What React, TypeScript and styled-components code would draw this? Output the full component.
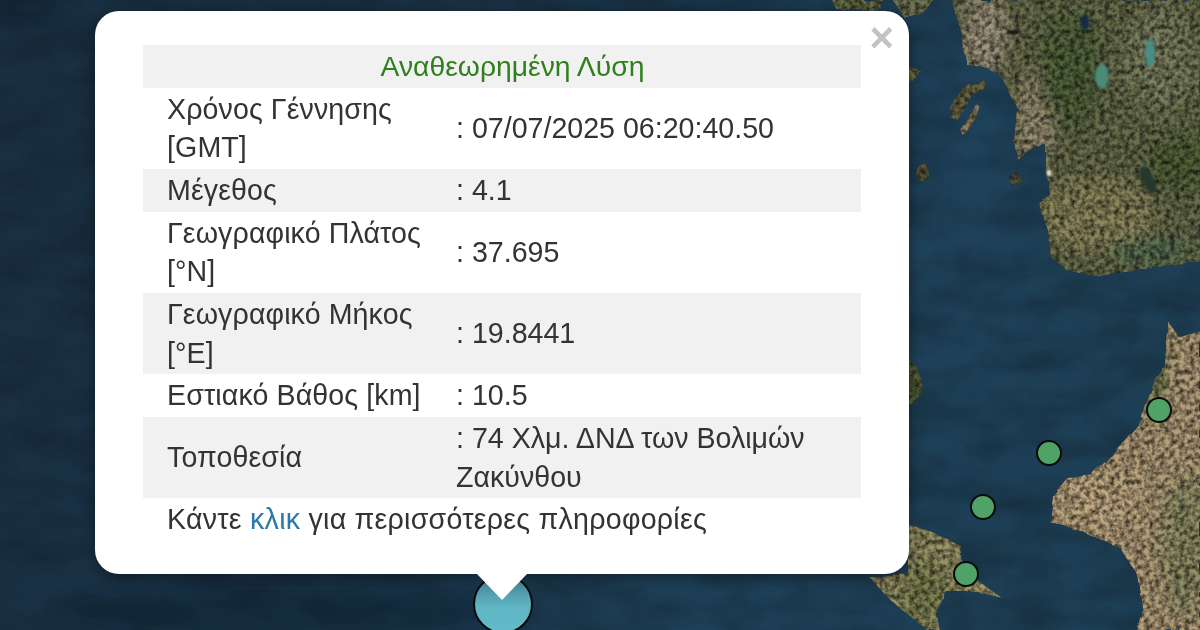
import React from 'react';
import styled, {createGlobalStyle} from 'styled-components';

const GlobalStyle = createGlobalStyle`
    html, body {
        margin: 0;
        padding: 0;
        background: #1b3346;
    }
`

type QuakeRow = {
    label: string
    value: string
}

const rows: QuakeRow[] = [
    {label: 'Χρόνος Γέννησης [GMT]', value: ': 07/07/2025 06:20:40.50'},
    {label: 'Μέγεθος', value: ': 4.1'},
    {label: 'Γεωγραφικό Πλάτος [°N]', value: ': 37.695'},
    {label: 'Γεωγραφικό Μήκος [°E]', value: ': 19.8441'},
    {label: 'Εστιακό Βάθος [km]', value: ': 10.5'},
    {label: 'Τοποθεσία', value: ': 74 Χλμ. ΔΝΔ των Βολιμών Ζακύνθου'},
]

const pins = [
    {x: 1159, y: 410},
    {x: 1049, y: 453},
    {x: 983, y: 507},
    {x: 966, y: 574},
]

const mainland = 'M952 0 L958 22 L963 45 L968 66 L985 68 L1000 75 L1008 92 L1016 106 L1013 140 L1018 160 L1032 150 L1045 143 L1045 170 L1049 193 L1040 205 L1047 230 L1050 256 L1066 270 L1100 276 L1140 270 L1190 262 L1200 262 L1200 0 Z'
const peloponnese = 'M1167 320 L1165 365 L1153 385 L1140 422 L1120 445 L1093 475 L1067 478 L1053 495 L1050 522 L1083 532 L1120 548 L1137 575 L1142 608 L1137 630 L1200 630 L1200 330 L1178 336 Z'
const cape = 'M908 524 L933 532 L960 545 L963 568 L980 582 L1002 598 L977 592 L947 592 L937 615 L940 630 L927 630 L890 600 L870 578 L908 574 Z'

const MapDrawing = () => (
    <MapSvg viewBox="0 0 1200 630">
        <defs>
            <filter id="sea" x="0" y="0" width="100%" height="100%" colorInterpolationFilters="sRGB">
                <feTurbulence type="fractalNoise" baseFrequency="0.018 0.035" numOctaves="4" seed="11"/>
                <feColorMatrix values="0 0 0 0 0.05  0 0 0 0 0.09  0 0 0 0 0.13  0.6 0 0 0 -0.18"/>
                <feComposite in2="SourceGraphic" operator="over"/>
            </filter>
            <filter id="land" x="0" y="0" width="100%" height="100%" colorInterpolationFilters="sRGB">
                <feTurbulence type="fractalNoise" baseFrequency="0.05" numOctaves="2" seed="9" result="warp"/>
                <feDisplacementMap in="SourceGraphic" in2="warp" scale="6" result="shape"/>
                <feTurbulence type="fractalNoise" baseFrequency="0.2" numOctaves="3" seed="4" result="noise"/>
                <feColorMatrix in="noise" values="1.4 0 0 0 0.05  1.4 0 0 0 0.05  1.4 0 0 0 0.05  0 0 0 0 1" result="grain"/>
                <feComposite in="shape" in2="grain" operator="arithmetic" k1="1.12" k2="0" k3="0" k4="0" result="tex"/>
                <feComposite in="tex" in2="shape" operator="in"/>
                <feGaussianBlur stdDeviation="0.65"/>
            </filter>
            <filter id="soft"><feGaussianBlur stdDeviation="9"/></filter>
            <filter id="tiny"><feGaussianBlur stdDeviation="1.2"/></filter>
            <linearGradient id="water" x1="0" y1="0" x2="1" y2="0.25">
                <stop offset="0" stopColor="#192f41"/>
                <stop offset="0.5" stopColor="#1a3347"/>
                <stop offset="0.82" stopColor="#1e425a"/>
                <stop offset="1" stopColor="#1d3f55"/>
            </linearGradient>
            <clipPath id="topLand"><path d={mainland}/></clipPath>
            <clipPath id="bottomLand"><path d={peloponnese}/></clipPath>
            <clipPath id="capeLand"><path d={cape}/></clipPath>
        </defs>

        <rect width="1200" height="630" fill="url(#water)" filter="url(#sea)"/>

        <g filter="url(#land)">
            <path d={mainland} fill="#5f6344"/>
            <g clipPath="url(#topLand)">
                <g filter="url(#soft)">
                    <ellipse cx="985" cy="35" rx="24" ry="40" fill="#8f8670"/>
                    <ellipse cx="1035" cy="120" rx="18" ry="50" fill="#8f846a"/>
                    <ellipse cx="1095" cy="215" rx="60" ry="36" fill="#7f7a52"/>
                    <ellipse cx="1070" cy="70" rx="32" ry="60" fill="#4a5a34"/>
                    <ellipse cx="1180" cy="165" rx="34" ry="28" fill="#4a5931"/>
                    <ellipse cx="1160" cy="60" rx="36" ry="50" fill="#6f7355"/>
                    <ellipse cx="1150" cy="250" rx="40" ry="10" fill="#47654d"/>
                </g>
            </g>
            <path d={peloponnese} fill="#a28f6e"/>
            <g clipPath="url(#bottomLand)">
                <g filter="url(#soft)">
                    <ellipse cx="1185" cy="545" rx="22" ry="70" fill="#7f7f5a"/>
                    <ellipse cx="1155" cy="370" rx="8" ry="45" fill="#4f6236"/>
                    <ellipse cx="1100" cy="500" rx="45" ry="28" fill="#ae9874"/>
                </g>
            </g>
            <path d={cape} fill="#8a855c"/>
            <g clipPath="url(#capeLand)">
                <g filter="url(#soft)">
                    <ellipse cx="925" cy="590" rx="24" ry="30" fill="#6f7546"/>
                    <ellipse cx="985" cy="590" rx="16" ry="6" fill="#a08e62"/>
                </g>
            </g>
            <path d="M832 0 L883 0 L880 8 L850 11 L836 9 Z" fill="#5d6440"/>
            <path d="M893 0 L934 0 L922 14 L905 19 Z" fill="#66694a"/>
            <path d="M955 98 L968 84 L987 80 L986 88 L970 96 L958 120 L950 118 Z" fill="#5b5a3c"/>
            <path d="M975 103 L979 105 L972 125 L963 136 L960 130 Z" fill="#7a7052"/>
            <path d="M908 66 L920 70 L914 82 L908 84 Z" fill="#61623b"/>
            <path d="M918 170 L925 160 L931 178 L918 181 Z" fill="#4d4c34"/>
            <path d="M1008 175 L1018 170 L1024 185 L1012 186 Z" fill="#4a4a36"/>
            <path d="M908 358 L918 368 L923 385 L916 404 L908 406 Z" fill="#4e5a35"/>
        </g>

        <g filter="url(#tiny)">
            <ellipse cx="1102" cy="76" rx="7" ry="12" fill="#4c8a78"/>
            <ellipse cx="1150" cy="53" rx="5" ry="14" fill="#4c8c84"/>
            <ellipse cx="1148" cy="180" rx="6" ry="15" fill="#26382f" transform="rotate(-25 1148 180)"/>
            <ellipse cx="1014" cy="32" rx="7" ry="2" fill="#111"/>
            <ellipse cx="1085" cy="22" rx="4" ry="8" fill="#122a44"/>
            <rect x="1047" y="170" width="4" height="6" fill="#e8e6da"/>
        </g>

        <g fill="#0e1c28" opacity="0.5" filter="url(#soft)">
            <ellipse cx="30" cy="8" rx="40" ry="7"/>
            <ellipse cx="300" cy="610" rx="240" ry="24" opacity="0.45"/>
            <ellipse cx="962" cy="490" rx="12" ry="5"/>
        </g>
    </MapSvg>
)

export default function App() {
    return (
        <Page>
            <GlobalStyle/>
            <MapDrawing/>
            {pins.map((pin) => (
                <Pin key={pin.x} $x={pin.x} $y={pin.y}/>
            ))}
            <FocusPin/>
            <Popup>
                <CloseButton>×</CloseButton>
                <Title>Αναθεωρημένη Λύση</Title>
                {rows.map((row, index) => (
                    <Row key={row.label} $shaded={index % 2 === 1}>
                        <Label>{row.label}</Label>
                        <Value>{row.value}</Value>
                    </Row>
                ))}
                <Footer>
                    Κάντε <MoreLink>κλικ</MoreLink> για περισσότερες πληροφορίες
                </Footer>
                <Tip/>
            </Popup>
        </Page>
    );
}

const Page = styled.div`
    position: relative;
    width: 1200px;
    height: 630px;
    overflow: hidden;
    font-family: "Liberation Sans", Arial, sans-serif;
    font-size: 28.6px;
    line-height: 38.4px;
    color: #333;
`
const MapSvg = styled.svg`
    position: absolute;
    inset: 0;
    width: 1200px;
    height: 630px;
`
const Pin = styled.span<{ $x: number, $y: number }>`
    position: absolute;
    left: ${(props) => props.$x - 13}px;
    top: ${(props) => props.$y - 13}px;
    width: 26px;
    height: 26px;
    box-sizing: border-box;
    border: 2.5px solid #0a0a0a;
    border-radius: 50%;
    background: #50a267;
`
const FocusPin = styled.span`
    position: absolute;
    left: 473px;
    top: 574px;
    width: 60px;
    height: 60px;
    box-sizing: border-box;
    border: 2px solid #0a0a0a;
    border-radius: 50%;
    background: linear-gradient(180deg, #447f90 0%, #5fb5c4 55%, #62bbc9 100%);
`
const Popup = styled.div`
    position: absolute;
    left: 95px;
    top: 11px;
    width: 814px;
    box-sizing: border-box;
    padding: 34px 48px 33px;
    background: #fff;
    border-radius: 24px;
    box-shadow: 0 3px 14px rgba(0, 0, 0, 0.4);
`
const Tip = styled.div`
    position: absolute;
    left: 382px;
    bottom: -26px;
    width: 50px;
    height: 26px;
    background: #fff;
    clip-path: polygon(0 0, 100% 0, 50% 100%);
`
const CloseButton = styled.a`
    position: absolute;
    top: 8px;
    right: 15px;
    font-size: 42px;
    line-height: 38px;
    font-weight: 700;
    color: #c3c3c3;
`
const Title = styled.div`
    padding: 2.2px 0 2.2px 21px;
    background: #f1f1f1;
    text-align: center;
    font-size: 28.3px;
    color: #2f7f1c;
`
const Row = styled.div<{ $shaded: boolean }>`
    display: grid;
    grid-template-columns: 313px 1fr;
    align-items: center;
    padding: 2.2px 0;
    background: ${(props) => (props.$shaded ? '#f1f1f1' : '#fff')};
`
const Label = styled.div`
    padding: 0 24px;
    letter-spacing: 0.1px;
`
const Value = styled.div`
    padding-right: 24px;
`
const Footer = styled.div`
    padding: 2.2px 24px;
    letter-spacing: 0.25px;
`
const MoreLink = styled.a`
    color: #2b79a9;
`
